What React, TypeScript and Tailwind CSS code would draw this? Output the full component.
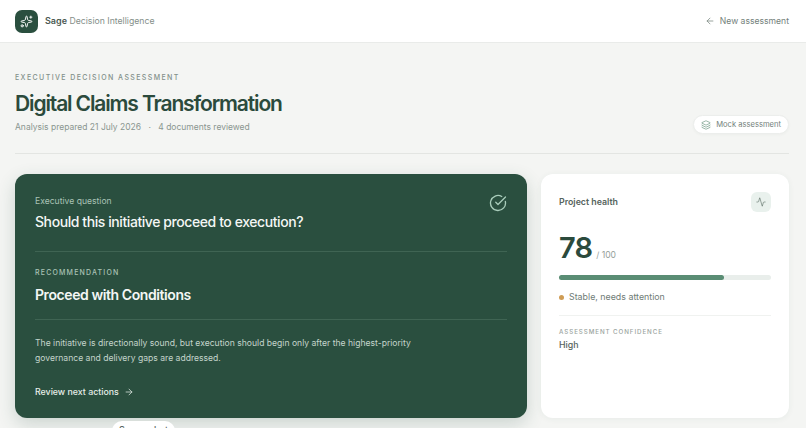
import { Activity, ArrowLeft, ArrowRight, CircleCheckBig, Layers, Sparkles } from "lucide-react";

const font = { fontFamily: "Inter, sans-serif" };

function Header() {
  return (
    <header className="flex h-[43px] items-center justify-between border-b border-[#e9ebe9] bg-white pl-[15px] pr-[17px]">
      <div className="flex items-center gap-[7px]">
        <div className="flex h-[23px] w-[23px] items-center justify-center rounded-[7px] bg-[#2a4f3f] text-white">
          <Sparkles size={13} strokeWidth={1.75} />
        </div>
        <span className="text-[8.7px] text-[#858f8a]">
          <span className="text-[9px] font-semibold text-[#4c5a53]">Sage</span> Decision Intelligence
        </span>
      </div>
      <button className="flex items-center gap-[5px] text-[8.6px] text-[#74817b]">
        <ArrowLeft size={10} strokeWidth={1.75} />
        New assessment
      </button>
    </header>
  );
}

function TitleBlock() {
  return (
    <section className="flex items-end justify-between border-b border-[#e3e5e2] pb-[19px]">
      <div>
        <p className="text-[7px] font-medium leading-[10px] tracking-[0.2em] text-[#82908a]">
          EXECUTIVE DECISION ASSESSMENT
        </p>
        <h1 className="mt-[6px] text-[21px] font-semibold leading-[30px] tracking-[-0.054em] text-[#2b4a3c]">
          Digital Claims Transformation
        </h1>
        <p className="mt-[1px] text-[8.5px] leading-[14px] text-[#8a9590]">
          Analysis prepared 21 July 2026 <span className="mx-[5px]">·</span> 4 documents reviewed
        </p>
      </div>
      <div className="flex h-[19px] items-center gap-[5px] rounded-full border border-[#eceeec] bg-white px-[7px] text-[7.6px] text-[#74817b] shadow-[0_1px_3px_rgba(42,79,63,0.04)]">
        <Layers size={10} strokeWidth={1.5} className="text-[#5c8b73]" />
        Mock assessment
      </div>
    </section>
  );
}

function DecisionCard() {
  return (
    <div className="flex flex-1 flex-col rounded-[12px] bg-[#2a4f3f] px-[20px] pt-[20px] text-white shadow-[0_6px_18px_rgba(42,79,63,0.2)]">
      <div className="flex justify-between border-b border-[#3f6453] pb-[18px]">
        <div>
          <p className="mt-[1px] text-[8.6px] leading-[12px] text-[#a9c2b5]">Executive question</p>
          <h2 className="mt-[4px] text-[14px] font-[450] leading-[22px] tracking-[-0.03em] text-[#f4f7f5]">
            Should this initiative proceed to execution?
          </h2>
        </div>
        <CircleCheckBig size={18} strokeWidth={1.75} className="text-[#a9cdbb]" />
      </div>
      <div className="border-b border-[#3f6453] pb-[13px] pt-[16px]">
        <p className="text-[7px] font-medium leading-[10px] tracking-[0.17em] text-[#a9c2b5]">RECOMMENDATION</p>
        <h3 className="mt-[6px] text-[14px] font-semibold leading-[22px] tracking-[-0.03em] text-[#f4f7f5]">
          Proceed with Conditions
        </h3>
      </div>
      <p className="mt-[16px] w-[385px] text-[8.6px] leading-[15px] text-[#c5d5cc]">
        The initiative is directionally sound, but execution should begin only after the highest-priority governance and
        delivery gaps are addressed.
      </p>
      <button className="mt-[19px] flex items-center gap-[5px] text-[8.8px] font-medium text-[#e6eee9]">
        Review next actions
        <ArrowRight size={10} strokeWidth={1.75} />
      </button>
    </div>
  );
}

function HealthCard() {
  return (
    <div className="w-[248px] rounded-[12px] bg-white px-[18px] pt-[18px] shadow-[0_1px_6px_rgba(42,79,63,0.06)]">
      <div className="flex items-center justify-between">
        <span className="text-[8.8px] font-semibold text-[#56645d]">Project health</span>
        <div className="flex h-[20px] w-[20px] items-center justify-center rounded-[6px] bg-[#e9f1ed] text-[#5b6e65]">
          <Activity size={10} strokeWidth={1.5} />
        </div>
      </div>
      <div className="mt-[18px] flex items-baseline gap-[4px]">
        <span className="text-[29px] font-semibold leading-[36px] tracking-[-0.03em] text-[#2b4a3c]">78</span>
        <span className="text-[8.6px] text-[#959e99]">/ 100</span>
      </div>
      <div className="mt-[9px] h-[5px] rounded-full bg-[#e9eeeb]">
        <div className="h-full w-[78%] rounded-full bg-[#5a8d74]" />
      </div>
      <div className="mt-[11px] flex items-center gap-[5px] border-b border-[#f0f2f0] pb-[12px] text-[8.85px] leading-[12px] text-[#6f7c76]">
        <span className="h-[5px] w-[5px] rounded-full bg-[#cf9c55]" />
        Stable, needs attention
      </div>
      <p className="mt-[11px] text-[6.2px] font-medium leading-[9px] tracking-[0.15em] text-[#9aa39e]">
        ASSESSMENT CONFIDENCE
      </p>
      <p className="mt-[2px] text-[8.8px] font-medium leading-[14px] text-[#56645d]">High</p>
    </div>
  );
}

export default function App() {
  return (
    <div style={font} className="relative h-[428px] w-[806px] overflow-hidden bg-[#f4f5f3]">
      <Header />
      <main className="pl-[15px] pr-[17px] pt-[30px]">
        <TitleBlock />
        <div className="mt-[20px] flex h-[244px] gap-[14px]">
          <DecisionCard />
          <HealthCard />
        </div>
      </main>
      <div className="absolute left-[112px] top-[421px] flex h-[20px] w-[63px] justify-center rounded-full bg-white pt-[2px] text-[9px] font-medium text-[#56645d]">
        Screenshot
      </div>
    </div>
  );
}
